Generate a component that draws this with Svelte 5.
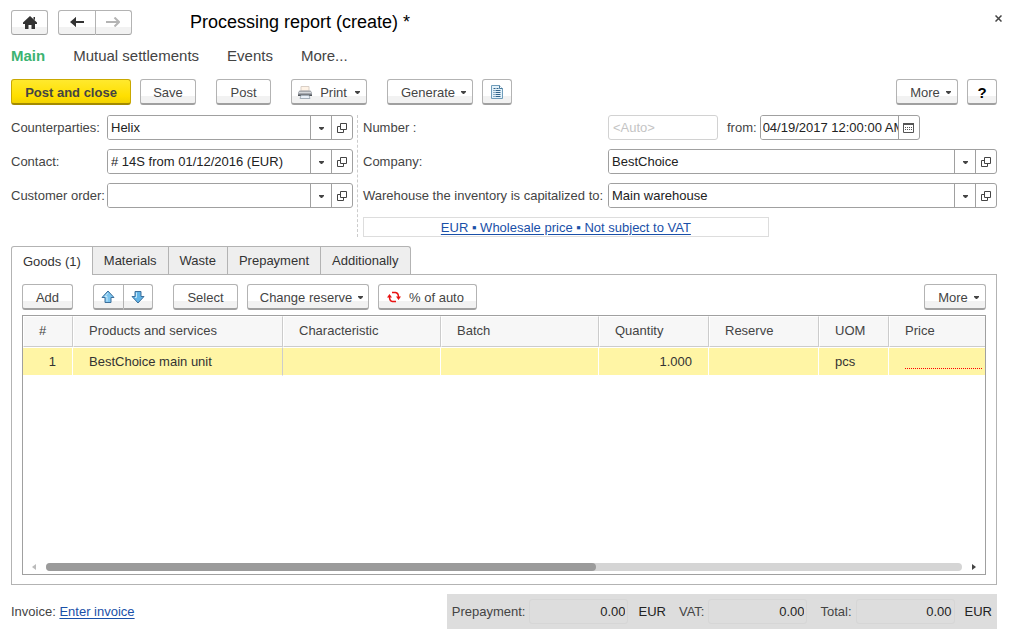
<script>
  const tabs = ['Goods (1)', 'Materials', 'Waste', 'Prepayment', 'Additionally'];
  const columns = [
    { title: '#', width: 50 },
    { title: 'Products and services', width: 210 },
    { title: 'Characteristic', width: 158 },
    { title: 'Batch', width: 158 },
    { title: 'Quantity', width: 110 },
    { title: 'Reserve', width: 110 },
    { title: 'UOM', width: 70 },
    { title: 'Price', width: 0 }
  ];
  const totals = [
    { id: 'prepayment', label: 'Prepayment:', currency: 'EUR' },
    { id: 'vat', label: 'VAT:', currency: '' },
    { id: 'total', label: 'Total:', currency: 'EUR' }
  ];
  let active = $state(0);
</script>

{#snippet caret()}
  <svg class="caret" width="5" height="3" viewBox="0 0 5 3" aria-hidden="true"><path d="M0 0h5v1L3 3H2L0 1z" fill="#444" /></svg>
{/snippet}

{#snippet picker(id, label, value)}
  <label for={id}>{label}</label>
  <div class="field">
    <input {id} type="text" {value} />
    <button class="part" aria-label="Choose {label}">{@render caret()}</button>
    <button class="part" aria-label="Open {label}">
      <svg width="10" height="10" viewBox="0 0 10 10" fill="none" stroke="#444" aria-hidden="true"><path d="M3.5.5h6v6h-6zM3.5 3.5h-3v6h6v-3" /></svg>
    </button>
  </div>
{/snippet}

<main>
  <header>
    <button class="btn home" aria-label="Home">
      <svg width="16" height="13" viewBox="0 0 16 13" aria-hidden="true"><path d="M8 0l7 6.5V8h-2v5H9.500V9h-3v4H3V8H1V6.500zM11.500 1H13v3l-1.500-1z" fill="#333" /></svg>
    </button>
    <div class="pair nav-pair">
      <button class="btn" aria-label="Back">
        <svg width="14" height="10" viewBox="0 0 14 10" aria-hidden="true"><path d="M6 0v4h8v2H6v4L0 5z" fill="#333" /><path d="M6 0L3.500 3.500H6zM6 10L3.500 6.500H6z" fill="#333" /></svg>
      </button>
      <button class="btn" aria-label="Forward">
        <svg width="14" height="10" viewBox="0 0 14 10" aria-hidden="true"><path d="M8.500.500L13 5 8.500 9.500M12.500 5H0" fill="none" stroke="#b4b4b4" stroke-width="2" /></svg>
      </button>
    </div>
    <h1>Processing report (create) *</h1>
    <button class="close" aria-label="Close">
      <svg width="7" height="7" viewBox="0 0 7 7" aria-hidden="true"><path d="M.5.5l6 6M6.500.500l-6 6" stroke="#444" stroke-width="1.500" /></svg>
    </button>
  </header>

  <nav>
    <a class="current" href="#main">Main</a>
    <a href="#settlements">Mutual settlements</a>
    <a href="#events">Events</a>
    <a href="#more">More...</a>
  </nav>

  <div class="toolbar">
    <button class="btn primary">Post and close</button>
    <button class="btn save">Save</button>
    <button class="btn post">Post</button>
    <button class="btn print">
      <svg width="14" height="13" viewBox="0 0 14 13" aria-hidden="true">
        <path d="M3 .5h8V5H3z" fill="#fff3e6" stroke="#d9cfc6" />
        <path d="M1.500 4.500h11L14 6.500V10H0V6.500z" fill="#a4a8ae" />
        <path d="M1 6.500h12" stroke="#d5d8dc" />
        <path d="M0 8.500h14V10H0z" fill="#50545a" />
        <path d="M3 9.500h8l1 3H2z" fill="#e9f0f8" stroke="#a3aeb9" />
      </svg>
      <span>Print</span>{@render caret()}
    </button>
    <button class="btn generate"><span>Generate</span>{@render caret()}</button>
    <button class="btn report" aria-label="Report">
      <svg width="12" height="14" viewBox="0 0 12 14" aria-hidden="true">
        <path d="M.5.500h8l3 3v10H.5z" fill="#e4f2fa" stroke="#6f9cba" />
        <path d="M8.500.500v3h3" fill="#fff" stroke="#47789a" />
        <path d="M2.500 3.500h2M5.500 3.500h2M2.500 5.500h1M4.500 5.500h5M2.500 7.500h1M4.500 7.500h5M2.500 9.500h1M4.500 9.500h5M2.500 11.500h1M4.500 11.500h5" stroke="#31638a" />
      </svg>
    </button>
    <button class="btn more end"><span>More</span>{@render caret()}</button>
    <button class="btn help" aria-label="Help">?</button>
  </div>

  <div class="form">
    <div class="left">
      {@render picker('counterparty', 'Counterparties:', 'Helix')}
      {@render picker('contact', 'Contact:', '# 14S from 01/12/2016 (EUR)')}
      {@render picker('order', 'Customer order:', '')}
    </div>
    <div class="right">
      <label for="number">Number :</label>
      <div class="line">
        <input id="number" class="auto" type="text" placeholder="<Auto>" />
        <label for="date">from:</label>
        <div class="field date">
          <input id="date" type="text" value="04/19/2017 12:00:00 AM" />
          <button class="part" aria-label="Calendar">
            <svg width="11" height="10" viewBox="0 0 11 10" aria-hidden="true"><path d="M.5 1.500h10v8H.5z" fill="none" stroke="#555" /><path d="M0 1h11" stroke="#555" stroke-width="2" /><path d="M2 4.500h7M2 6.500h7" stroke="#555" stroke-dasharray="1 1" /></svg>
          </button>
        </div>
      </div>
      {@render picker('company', 'Company:', 'BestChoice')}
      {@render picker('warehouse', 'Warehouse the inventory is capitalized to:', 'Main warehouse')}
      <div class="terms"><a href="#terms">EUR ▪ Wholesale price ▪ Not subject to VAT</a></div>
    </div>
  </div>

  <div class="tabs" role="tablist">
    {#each tabs as tab, i}
      <button role="tab" aria-selected={active === i} class:active={active === i} onclick={() => (active = i)}>{tab}</button>
    {/each}
  </div>

  <section class="panel">
    <div class="toolbar commands">
      <button class="btn add">Add</button>
      <div class="pair move-pair">
        <button class="btn" aria-label="Move up">
          <svg width="14" height="14" viewBox="0 0 14 14" aria-hidden="true"><path d="M7 1l6 6.500h-3V12.500H4V7.500H1z" fill="#7cc4ee" stroke="#3c6f9b" /><path d="M7 3L4 6.500h2v5" fill="none" stroke="#c6e8fa" /></svg>
        </button>
        <button class="btn" aria-label="Move down">
          <svg width="14" height="14" viewBox="0 0 14 14" aria-hidden="true"><path d="M7 13l6-6.500h-3V1.500H4v5H1z" fill="#62b4e6" stroke="#3c6f9b" /><path d="M5.500 2.500v5H4" fill="none" stroke="#c6e8fa" /></svg>
        </button>
      </div>
      <button class="btn select">Select</button>
      <button class="btn reserve"><span>Change reserve</span>{@render caret()}</button>
      <button class="btn percent">
        <svg width="14" height="12" viewBox="0 0 14 12" aria-hidden="true"><path d="M5 1.500H8.500Q11.500 2 11.500 6M9 10.500H5.500Q2.500 10 2.500 6" fill="none" stroke="#e81313" stroke-width="1.500" /><path d="M9 5.500h5L11.500 9zM0 6.500h5L2.500 3z" fill="#e81313" /></svg>
        <span>% of auto</span>
      </button>
      <button class="btn more end"><span>More</span>{@render caret()}</button>
    </div>

    <div class="grid">
      <table>
        <colgroup>
          {#each columns as column}
            <col style:width={column.width ? `${column.width}px` : 'auto'} />
          {/each}
        </colgroup>
        <thead>
          <tr>{#each columns as column}<th scope="col">{column.title}</th>{/each}</tr>
        </thead>
        <tbody>
          <tr>
            <td class="num">1</td>
            <td class="product">BestChoice main unit</td>
            <td></td>
            <td></td>
            <td class="num">1.000</td>
            <td></td>
            <td>pcs</td>
            <td class="price"><div class="required"></div></td>
          </tr>
        </tbody>
      </table>
      <div class="scroll">
        <button aria-label="Scroll left"><svg width="4" height="6" viewBox="0 0 4 6" aria-hidden="true"><path d="M4 0v6L0 3z" fill="#bbb" /></svg></button>
        <div class="track"><div class="thumb"></div></div>
        <button aria-label="Scroll right"><svg width="4" height="6" viewBox="0 0 4 6" aria-hidden="true"><path d="M0 0v6l4-3z" fill="#444" /></svg></button>
      </div>
    </div>
  </section>

  <footer>
    <div>Invoice: <a href="#invoice">Enter invoice</a></div>
    <div class="totals">
      {#each totals as total}
        <div class="total">
          <label for={total.id}>{total.label}</label>
          <input id={total.id} type="text" value="0.00" readonly />
          {#if total.currency}<span>{total.currency}</span>{/if}
        </div>
      {/each}
    </div>
  </footer>
</main>

<style>
  :global(body) {
    margin: 0;
    background: #fff;
  }
  main, button, input {
    font-family: "Liberation Sans", Arial, sans-serif;
    font-size: 13px;
    color: #444;
  }
  main {
    padding: 9px 14px 8px 11px;
    line-height: 16px;
  }
  main, main * {
    box-sizing: border-box;
  }
  button {
    margin: 0;
    padding: 0;
    border: 0;
    background: none;
  }
  svg {
    display: block;
    flex: none;
  }
  a {
    color: #1a50a8;
    text-underline-offset: 2px;
  }
  .btn {
    display: flex;
    align-items: center;
    justify-content: center;
    height: 26px;
    padding-top: 1px;
    border: 1px solid #b3b3b3;
    border-bottom: 2px solid #a0a0a0;
    border-radius: 3px;
    background: linear-gradient(#fff 70%, #f2f2f2 70%);
    white-space: nowrap;
  }
  header .btn {
    height: 25px;
    border-bottom-width: 1px;
    padding: 0;
  }
  .pair {
    display: flex;
  }
  .pair .btn {
    flex: 1;
  }
  .pair .btn:first-child {
    border-radius: 3px 0 0 3px;
  }
  .pair .btn:last-child {
    border-left: 0;
    border-radius: 0 3px 3px 0;
  }
  header {
    display: flex;
    align-items: center;
  }
  .home {
    width: 37px;
    margin-right: 10px;
  }
  .nav-pair {
    width: 74px;
    margin-right: 58px;
  }
  h1 {
    margin: 0;
    font-size: 18px;
    font-weight: 400;
    line-height: 26px;
    color: #000;
  }
  .close {
    margin-left: auto;
    padding: 4px;
    margin-right: -9px;
    margin-bottom: 8px;
  }
  nav {
    display: flex;
    gap: 28px;
    padding: 12px 0 14px;
    font-size: 15px;
    line-height: 18px;
  }
  nav a {
    color: #444;
    text-decoration: none;
  }
  nav .current {
    color: #3cb371;
    font-weight: 700;
  }
  .toolbar {
    display: flex;
  }
  .end {
    margin-left: auto;
  }
  .primary {
    width: 120px;
    margin-right: 9px;
    border-color: #c9a800 #c9a800 #a38a00;
    background: linear-gradient(#ffe92e, #ffdf00 70%, #f2d200);
    font-weight: 700;
  }
  .save {
    width: 56px;
    margin-right: 20px;
  }
  .post {
    width: 55px;
    margin-right: 20px;
  }
  .print {
    width: 76px;
    margin-right: 20px;
    gap: 8px;
  }
  .generate {
    width: 86px;
    margin-right: 9px;
  }
  .report {
    width: 30px;
  }
  .more {
    width: 62px;
  }
  .more, .generate, .reserve {
    padding-left: 7px;
    gap: 6px;
  }
  .help {
    width: 30px;
    margin-left: 9px;
    font-size: 15px;
    color: #000;
    font-weight: 700;
  }
  .form {
    display: grid;
    grid-template-columns: 347px 1fr;
    margin-top: 10px;
  }
  .left {
    display: grid;
    grid-template-columns: 96px 1fr;
    grid-auto-rows: 25px;
    align-content: start;
    align-items: center;
    gap: 9px 0;
    padding-right: 4px;
    border-right: 1px dashed #ccc;
    white-space: nowrap;
  }
  .right {
    display: grid;
    grid-template-columns: 245px 1fr;
    grid-template-rows: 25px 25px 25px 20px;
    align-items: center;
    gap: 9px 0;
    padding-left: 5px;
    white-space: nowrap;
  }
  .line {
    display: flex;
    align-items: center;
  }
  .line label {
    margin: 0 3px 0 9px;
  }
  .field {
    display: flex;
    height: 25px;
    border: 1px solid #a0a0a0;
    border-radius: 3px;
    overflow: hidden;
  }
  .field input {
    flex: 1;
    min-width: 0;
    padding: 0 0 0 3px;
    border: 0;
    background: #fff;
    color: #222;
  }
  .part {
    display: flex;
    align-items: center;
    justify-content: center;
    width: 21px;
    padding-top: 1px;
    border-left: 1px solid #a0a0a0;
  }
  .date {
    width: 160px;
  }
  .date input {
    padding-left: 2px;
  }
  .auto {
    width: 110px;
    height: 25px;
    padding: 0 4px;
    border: 1px solid #d2d2d2;
    border-radius: 3px;
  }
  .auto::placeholder {
    color: #c4c4c4;
    opacity: 1;
  }
  .terms {
    grid-column: 1 / -1;
    width: 64%;
    height: 20px;
    border: 1px solid #ddd;
    text-align: center;
    line-height: 19px;
  }
  .tabs {
    display: flex;
    margin-top: 9px;
  }
  .tabs button {
    height: 28px;
    padding: 0 11px;
    border: 1px solid #b3b3b3;
    border-width: 1px 1px 0 0;
    background: #eee;
    color: #333;
  }
  .tabs button:first-child {
    border-left-width: 1px;
    border-top-left-radius: 3px;
  }
  .tabs button:last-child {
    border-top-right-radius: 3px;
  }
  .tabs .active {
    height: 29px;
    margin-bottom: -1px;
    background: #fff;
    z-index: 1;
  }
  .panel {
    padding: 9px 10px;
    border: 1px solid #b3b3b3;
  }
  .add {
    width: 51px;
    margin-right: 20px;
  }
  .move-pair {
    width: 60px;
    margin-right: 20px;
  }
  .select {
    width: 65px;
    margin-right: 9px;
  }
  .reserve {
    width: 122px;
    margin-right: 9px;
  }
  .percent {
    width: 99px;
    gap: 8px;
    padding-right: 4px;
  }
  .grid {
    display: flex;
    flex-direction: column;
    min-height: 260px;
    margin-top: 5px;
    border: 1px solid #a0a0a0;
  }
  table {
    width: 100%;
    table-layout: fixed;
    border-collapse: separate;
    border-spacing: 0;
  }
  th, td {
    padding: 0 16px;
    text-align: left;
    font-weight: 400;
    white-space: nowrap;
  }
  th {
    height: 31px;
    background: #f7f7f7;
    border: 1px solid #fff;
    border-right-color: #ccc;
    border-bottom-color: #ccc;
    padding: 0 15px 1px;
  }
  td {
    height: 29px;
    background: #fff5a5;
    border: solid #fff;
    border-width: 1px 1px 1px 0;
    color: #333;
  }
  th:last-child, td:last-child {
    border-right: 0;
  }
  .product {
    border-right-color: #ccc;
  }
  .num {
    text-align: right;
  }
  .price {
    padding-right: 3px;
  }
  .required {
    height: 15px;
    border-bottom: 1px dotted #f00;
  }
  .scroll {
    display: flex;
    align-items: center;
    gap: 10px;
    margin-top: auto;
    padding: 3px 9px;
  }
  .track {
    flex: 1;
    height: 8px;
    border-radius: 4px;
    background: #d5d5d5;
  }
  .thumb {
    width: 60%;
    height: 8px;
    border-radius: 4px;
    background: #9b9b9b;
  }
  footer {
    display: flex;
    align-items: center;
    justify-content: space-between;
    margin-top: 9px;
  }
  .totals {
    display: flex;
    gap: 13px;
    padding: 5px;
    background: #ddd;
  }
  .total {
    display: flex;
    align-items: center;
  }
  .total input {
    width: 99px;
    height: 25px;
    margin-left: 4px;
    padding: 0 2px;
    border: 1px solid #d6d6d6;
    border-radius: 3px;
    background: transparent;
    color: #222;
    text-align: right;
  }
  .total span {
    margin-left: 10px;
    color: #222;
  }
</style>
